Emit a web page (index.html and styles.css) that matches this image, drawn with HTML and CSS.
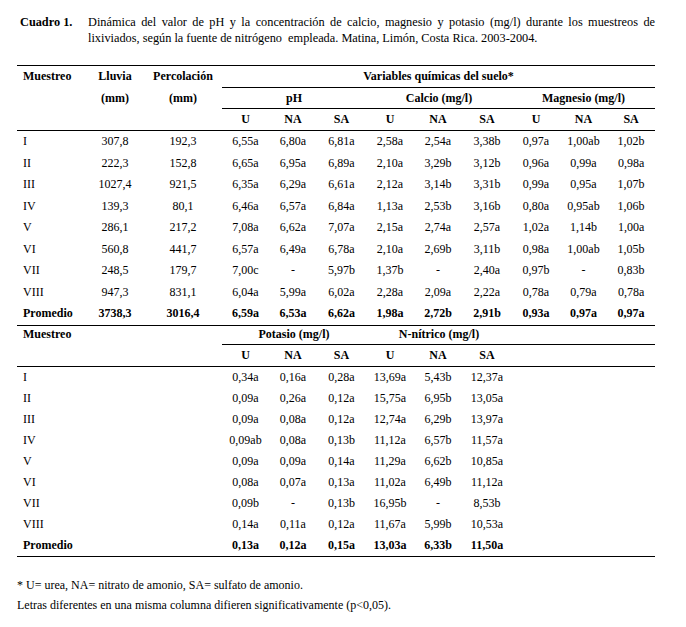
FILE: index.html
```html
<!DOCTYPE html>
<html lang="es">
<head>
<meta charset="utf-8">
<title>Cuadro 1</title>
<link rel="stylesheet" href="styles.css">
</head>
<body>
<div class="page">
  <div class="caption">
    <span class="cap-label">Cuadro 1.</span>
    <p class="cap-text">Dinámica del valor de pH y la concentración de calcio, magnesio y potasio (mg/l) durante los muestreos de lixiviados, según la fuente de nitrógeno&nbsp; empleada. Matina, Limón, Costa Rica. 2003-2004.</p>
  </div>

  <table class="data">
    <colgroup>
      <col class="c-mu"><col class="c-ll"><col class="c-pe">
      <col class="c47"><col class="c48"><col class="c49">
      <col class="c48"><col class="c48"><col class="c50">
      <col class="c48"><col class="c47"><col class="c48">
    </colgroup>
    <thead>
      <tr class="hr hr1">
        <th class="lbl">Muestreo</th><th>Lluvia</th><th>Percolación</th>
        <th colspan="9" class="rule">Variables químicas del suelo*</th>
      </tr>
      <tr class="hr hr2">
        <th></th><th>(mm)</th><th>(mm)</th>
        <th colspan="3" class="rule">pH</th>
        <th colspan="3" class="rule">Calcio (mg/l)</th>
        <th colspan="3" class="rule">Magnesio (mg/l)</th>
      </tr>
      <tr class="hr hr3 full">
        <th></th><th></th><th></th>
        <th>U</th><th>NA</th><th>SA</th>
        <th>U</th><th>NA</th><th>SA</th>
        <th>U</th><th>NA</th><th>SA</th>
      </tr>
    </thead>
    <tbody class="part1">
      <tr><td class="lbl">I</td><td>307,8</td><td>192,3</td><td>6,55a</td><td>6,80a</td><td>6,81a</td><td>2,58a</td><td>2,54a</td><td>3,38b</td><td>0,97a</td><td>1,00ab</td><td>1,02b</td></tr>
      <tr><td class="lbl">II</td><td>222,3</td><td>152,8</td><td>6,65a</td><td>6,95a</td><td>6,89a</td><td>2,10a</td><td>3,29b</td><td>3,12b</td><td>0,96a</td><td>0,99a</td><td>0,98a</td></tr>
      <tr><td class="lbl">III</td><td>1027,4</td><td>921,5</td><td>6,35a</td><td>6,29a</td><td>6,61a</td><td>2,12a</td><td>3,14b</td><td>3,31b</td><td>0,99a</td><td>0,95a</td><td>1,07b</td></tr>
      <tr><td class="lbl">IV</td><td>139,3</td><td>80,1</td><td>6,46a</td><td>6,57a</td><td>6,84a</td><td>1,13a</td><td>2,53b</td><td>3,16b</td><td>0,80a</td><td>0,95ab</td><td>1,06b</td></tr>
      <tr><td class="lbl">V</td><td>286,1</td><td>217,2</td><td>7,08a</td><td>6,62a</td><td>7,07a</td><td>2,15a</td><td>2,74a</td><td>2,57a</td><td>1,02a</td><td>1,14b</td><td>1,00a</td></tr>
      <tr><td class="lbl">VI</td><td>560,8</td><td>441,7</td><td>6,57a</td><td>6,49a</td><td>6,78a</td><td>2,10a</td><td>2,69b</td><td>3,11b</td><td>0,98a</td><td>1,00ab</td><td>1,05b</td></tr>
      <tr><td class="lbl">VII</td><td>248,5</td><td>179,7</td><td>7,00c</td><td>-</td><td>5,97b</td><td>1,37b</td><td>-</td><td>2,40a</td><td>0,97b</td><td>-</td><td>0,83b</td></tr>
      <tr><td class="lbl">VIII</td><td>947,3</td><td>831,1</td><td>6,04a</td><td>5,99a</td><td>6,02a</td><td>2,28a</td><td>2,09a</td><td>2,22a</td><td>0,78a</td><td>0,79a</td><td>0,78a</td></tr>
      <tr class="avg full"><td class="lbl">Promedio</td><td>3738,3</td><td>3016,4</td><td>6,59a</td><td>6,53a</td><td>6,62a</td><td>1,98a</td><td>2,72b</td><td>2,91b</td><td>0,93a</td><td>0,97a</td><td>0,97a</td></tr>
    </tbody>
    <tbody class="part2">
      <tr class="hr hr4">
        <th class="lbl">Muestreo</th><th></th><th></th>
        <th colspan="3" class="rule">Potasio (mg/l)</th>
        <th colspan="3" class="rule">N-nítrico (mg/l)</th>
        <th colspan="3" class="rule"></th>
      </tr>
      <tr class="hr hr5 full">
        <th></th><th></th><th></th>
        <th>U</th><th>NA</th><th>SA</th>
        <th>U</th><th>NA</th><th>SA</th>
        <th></th><th></th><th></th>
      </tr>
      <tr><td class="lbl">I</td><td></td><td></td><td>0,34a</td><td>0,16a</td><td>0,28a</td><td>13,69a</td><td>5,43b</td><td>12,37a</td><td></td><td></td><td></td></tr>
      <tr><td class="lbl">II</td><td></td><td></td><td>0,09a</td><td>0,26a</td><td>0,12a</td><td>15,75a</td><td>6,95b</td><td>13,05a</td><td></td><td></td><td></td></tr>
      <tr><td class="lbl">III</td><td></td><td></td><td>0,09a</td><td>0,08a</td><td>0,12a</td><td>12,74a</td><td>6,29b</td><td>13,97a</td><td></td><td></td><td></td></tr>
      <tr><td class="lbl">IV</td><td></td><td></td><td>0,09ab</td><td>0,08a</td><td>0,13b</td><td>11,12a</td><td>6,57b</td><td>11,57a</td><td></td><td></td><td></td></tr>
      <tr><td class="lbl">V</td><td></td><td></td><td>0,09a</td><td>0,09a</td><td>0,14a</td><td>11,29a</td><td>6,62b</td><td>10,85a</td><td></td><td></td><td></td></tr>
      <tr><td class="lbl">VI</td><td></td><td></td><td>0,08a</td><td>0,07a</td><td>0,13a</td><td>11,02a</td><td>6,49b</td><td>11,12a</td><td></td><td></td><td></td></tr>
      <tr><td class="lbl">VII</td><td></td><td></td><td>0,09b</td><td>-</td><td>0,13b</td><td>16,95b</td><td>-</td><td>8,53b</td><td></td><td></td><td></td></tr>
      <tr><td class="lbl">VIII</td><td></td><td></td><td>0,14a</td><td>0,11a</td><td>0,12a</td><td>11,67a</td><td>5,99b</td><td>10,53a</td><td></td><td></td><td></td></tr>
      <tr class="avg full"><td class="lbl">Promedio</td><td></td><td></td><td>0,13a</td><td>0,12a</td><td>0,15a</td><td>13,03a</td><td>6,33b</td><td>11,50a</td><td></td><td></td><td></td></tr>
    </tbody>
  </table>

  <div class="notes">
    <p>* U= urea, NA= nitrato de amonio, SA= sulfato de amonio.</p>
    <p>Letras diferentes en una misma columna difieren significativamente (p&lt;0,05).</p>
  </div>
</div>
</body>
</html>
```

FILE: styles.css
```css
html, body {
  margin: 0;
  padding: 0;
  background: #ffffff;
}

body {
  font-family: "Liberation Serif", "Times New Roman", serif;
  font-size: 12px;
  color: #000000;
}

.page {
  width: 638px;
  padding: 14px 0 0 17px;
}

.caption {
  display: flex;
  font-size: 12.3px;
  line-height: 16px;
  margin-left: 3px;
}

.cap-label {
  flex: 0 0 68px;
  font-weight: bold;
}

.cap-text {
  margin: 0;
  flex: 1;
  text-align: justify;
}

.data {
  margin-top: 19px;
  width: 638px;
  table-layout: fixed;
  border-collapse: collapse;
  border-top: 1px solid #000;
}

.c-mu { width: 69px; }
.c-ll { width: 58px; }
.c-pe { width: 78px; }
.c47 { width: 47px; }
.c48 { width: 48px; }
.c49 { width: 49px; }
.c50 { width: 50px; }

.data th,
.data td {
  padding: 0;
  text-align: center;
  white-space: nowrap;
  vertical-align: middle;
}

.data th {
  font-weight: bold;
}

.data .lbl {
  text-align: left;
  padding-left: 6px;
}

.hr1 th { height: 21px; }
.hr2 th { height: 20px; }
.hr3 th { height: 21px; }
.hr4 th { height: 18px; }
.hr5 th { height: 21px; }

.data th.rule {
  border-bottom: 1px solid #000;
}

.full th,
.full td {
  border-bottom: 1px solid #000;
}

.part1 td {
  height: 21.5px;
}

.part2 td {
  height: 21.1px;
}

.avg td {
  font-weight: bold;
}

.notes {
  margin-top: 18px;
  line-height: 20px;
  font-size: 12px;
}

.notes p {
  margin: 0;
}
```
